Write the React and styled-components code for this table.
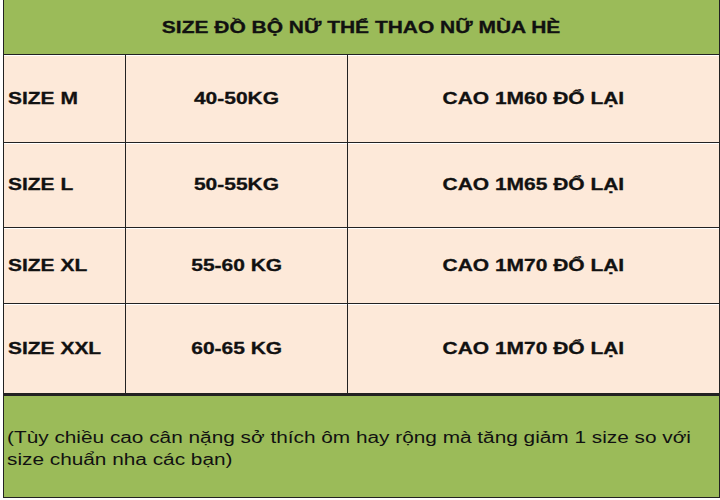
import React from "react";
import styled, { createGlobalStyle } from "styled-components";

const Global = createGlobalStyle`
  html, body { margin: 0; padding: 0; background: #ffffff; }
  body { font-family: "Liberation Sans", Arial, sans-serif; color: #111; }
`;

// the source picture is stretched wide, so text is widened to match
const STRETCH = 1.31;

const Sheet = styled.div`
  margin-left: 3px;
  width: 715px;
  height: 497px;
  border-left: 1px solid #222;
  border-right: 1px solid #222;
  border-bottom: 1px solid #222;
  display: flex;
  flex-direction: column;
  overflow: hidden;
`;

const Title = styled.div`
  height: 55px;
  flex-shrink: 0;
  background: #9bbb59;
  border-bottom: 1px solid #222;
  display: flex;
  align-items: center;
  justify-content: center;
  font-weight: bold;
  font-size: 16px;
  padding-top: 1px;
  box-sizing: border-box;
  -webkit-text-stroke: 0.3px #111;
`;

const Wide = styled.span`
  display: inline-block;
  white-space: nowrap;
  transform: scaleX(${STRETCH});
  transform-origin: ${(p) => (p.left ? "left center" : "center")};
`;

const Row = styled.div`
  height: ${(p) => p.h}px;
  flex-shrink: 0;
  display: grid;
  grid-template-columns: 122px 222px 1fr;
  background: #fde9d9;
  border-bottom: 1px solid #222;
  box-shadow: inset 0 1px 0 #fff;
`;

const Cell = styled.div`
  display: flex;
  align-items: center;
  justify-content: ${(p) => (p.center ? "center" : "flex-start")};
  padding-left: ${(p) => (p.center ? 0 : 4)}px;
  font-weight: bold;
  font-size: 16px;
  -webkit-text-stroke: 0.3px #111;
  border-right: ${(p) => (p.last ? "none" : "1px solid #222")};
`;

const Note = styled.div`
  flex: 1;
  background: #9bbb59;
  border-top: 2px solid #222;
  display: flex;
  align-items: center;
  padding: 4px 4px 0 3px;
`;

const NoteText = styled.div`
  width: 544px;
  font-size: 16px;
  line-height: 22px;
  transform: scaleX(1.3);
  transform-origin: left center;
`;

const rows = [
  { size: "SIZE M", weight: "40-50KG", height: "CAO 1M60 ĐỔ LẠI", h: 87 },
  { size: "SIZE L", weight: "50-55KG", height: "CAO 1M65 ĐỔ LẠI", h: 84 },
  { size: "SIZE XL", weight: "55-60 KG", height: "CAO 1M70 ĐỔ LẠI", h: 75 },
  { size: "SIZE XXL", weight: "60-65 KG", height: "CAO 1M70 ĐỔ LẠI", h: 89 },
];

export default function App() {
  return (
    <>
      <Global />
      <Sheet>
        <Title>
          <Wide>SIZE ĐỒ BỘ NỮ THỂ THAO NỮ MÙA HÈ</Wide>
        </Title>
        {rows.map((r) => (
          <Row key={r.size} h={r.h}>
            <Cell>
              <Wide left>{r.size}</Wide>
            </Cell>
            <Cell center>
              <Wide>{r.weight}</Wide>
            </Cell>
            <Cell center last>
              <Wide>{r.height}</Wide>
            </Cell>
          </Row>
        ))}
        <Note>
          <NoteText>
            (Tùy chiều cao cân nặng sở thích ôm hay rộng mà tăng giảm 1 size so
            với size chuẩn nha các bạn)
          </NoteText>
        </Note>
      </Sheet>
    </>
  );
}
